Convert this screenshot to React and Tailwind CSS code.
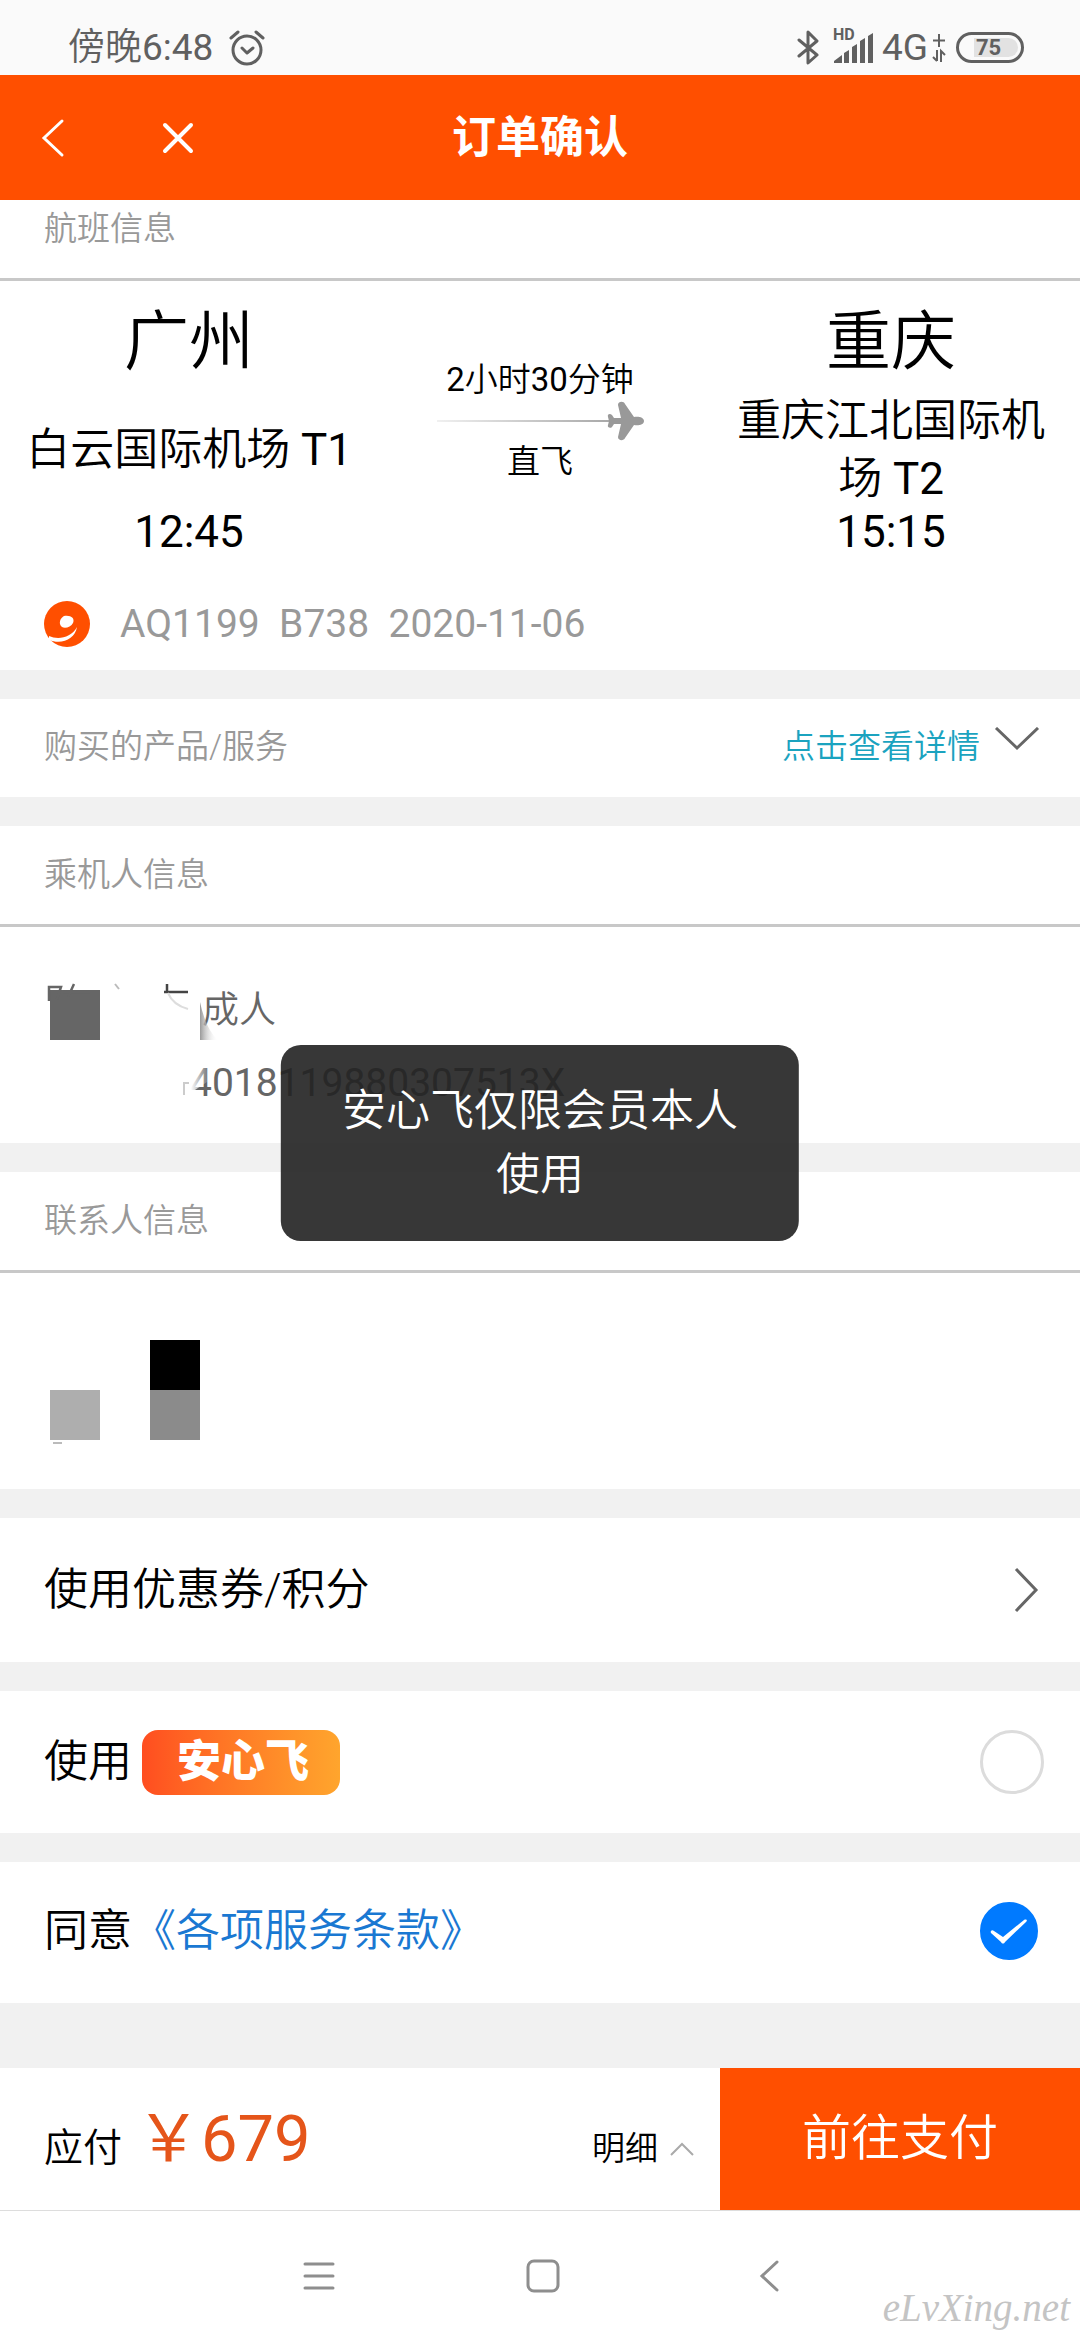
import { useState } from 'react';

function StatusBar() {
  return (
    <div className="h-[75px] bg-[#fafafa] text-[#606060] flex items-center justify-between pl-[68px] pr-14 pt-5">
      <div className="flex items-center gap-4">
        <span className="text-[37px] leading-10">傍晚<span className="font-normal">6:48</span></span>
        <svg width="36" height="36" viewBox="0 0 36 36" fill="none" stroke="currentColor" strokeWidth="3" strokeLinecap="round" strokeLinejoin="round">
          <circle cx="18" cy="20" r="14" />
          <path d="M13 18l5 5 6-5M2 8l7-6M27 2l7 6" />
        </svg>
      </div>
      <div className="flex items-center">
        <svg width="22" height="36" viewBox="0 0 22 36" fill="none" stroke="currentColor" strokeWidth="3" strokeLinejoin="round" strokeLinecap="round">
          <path d="M2 10l18 15-9 8V2l9 9L2 26" />
        </svg>
        <div className="relative ml-3.5 w-[41px] h-[34px]">
          <svg width="41" height="34" viewBox="0 0 41 34" fill="currentColor">
            <path d="M1 32v-2l8-6v8zM11 22l5-3v13h-5zM19 16l5-3v19h-5zM27 10l5-3v25h-5zM35 5l5-3v30h-5z" />
          </svg>
          <span className="absolute -top-1 left-0 text-[16px] leading-4 font-bold">HD</span>
        </div>
        <span className="ml-2 text-[37px] leading-10 font-normal">4G</span>
        <svg className="ml-1" width="14" height="32" viewBox="0 0 14 32" fill="none" stroke="currentColor" strokeWidth="2">
          <path d="M7 2v13M1 8.500h12M5 18v11M1 25l4 4M9 30V19l4 4" />
        </svg>
        <div className="ml-2.5 w-[68px] h-[31px] rounded-full border-[3px] border-current p-[3px]">
          <div className="h-full rounded-r-full ml-3 bg-[#e2e2e2] flex items-center pl-0.5">
            <span className="text-[22px] leading-5 font-bold">75</span>
          </div>
        </div>
      </div>
    </div>
  );
}

function Header() {
  return (
    <header className="h-[125px] bg-[#ff4f00] text-white grid grid-cols-3 items-center">
      <div className="flex items-center pl-10">
        <button aria-label="返回" className="w-[122px]">
          <svg width="26" height="40" viewBox="0 0 26 40" fill="none" stroke="currentColor" strokeWidth="3" strokeLinecap="round">
            <path d="M22 3L4 20l18 17" />
          </svg>
        </button>
        <button aria-label="关闭">
          <svg width="32" height="32" viewBox="0 0 32 32" fill="none" stroke="currentColor" strokeWidth="4" strokeLinecap="round">
            <path d="M3 3l26 26M29 3L3 29" />
          </svg>
        </button>
      </div>
      <h1 className="text-center text-[44px] leading-[60px] font-bold">订单确认</h1>
    </header>
  );
}

function SectionTitle({ children }) {
  return (
    <div className="h-[101px] border-b-[3px] border-[#c8c8c8] bg-white flex items-center px-11">
      <h2 className="text-[33px] text-[#999]">{children}</h2>
    </div>
  );
}

function Airport({ city, name, terminal, time }) {
  return (
    <div className="w-[35%] px-5 text-center">
      <p className="text-[65px] leading-[100px]">{city}</p>
      <div className="h-[116px] flex items-center justify-center text-[44px] leading-[58px]">
        <p>{name} <span className="font-normal">{terminal}</span></p>
      </div>
      <p className="text-[44px] leading-[48px] font-normal">{time}</p>
    </div>
  );
}

function FlightInfo() {
  return (
    <section className="bg-white">
      <div className="h-[81px] pb-5 border-b-[3px] border-[#c8c8c8] flex items-center px-11">
        <h2 className="text-[33px] text-[#999]">航班信息</h2>
      </div>
      <div className="flex pt-[11px] pb-0.5 text-black">
        <Airport city="广州" name="白云国际机场" terminal="T1" time="12:45" />
        <div className="flex-1 pt-[68px] flex flex-col items-center text-[33px] leading-10">
          <p>
            <span className="font-normal">2</span>小时<span className="font-normal">30</span>分钟
          </p>
          <svg width="210" height="42" viewBox="0 0 210 40">
            <defs>
              <linearGradient id="trail">
                <stop offset="0" stopColor="#f0f0f0" />
                <stop offset="1" stopColor="#a8a8a8" />
              </linearGradient>
            </defs>
            <rect x="2" y="19" width="174" height="2" fill="url(#trail)" />
            <path fill="#999" d="M179 17h7l-3-13c0-4 6-4 7-1l9 13c4-1 10 0 10 4s-6 5-10 4l-9 13c-1 3-7 3-7-1l3-13h-7l-2 3c-2 2-5 0-4-2l1-4-1-4c-1-3 2-4 4-2z" />
          </svg>
          <p>直飞</p>
        </div>
        <Airport city="重庆" name="重庆江北国际机场" terminal="T2" time="15:15" />
      </div>
      <div className="flex items-center gap-[30px] h-28 pt-5 px-11 text-[39px] font-normal text-[#999]">
        <svg width="46" height="46" viewBox="0 0 46 46">
          <circle cx="23" cy="23" r="23" fill="#ff4f00" />
          <path fill="#fff" fillRule="evenodd" d="M20 15c7-1 11 2 9 7-2 4-8 6-11 4-4-3-2-9 2-11z" />
          <path fill="#fff" d="M5 35c9 4 22 2 28-9-2 12-15 18-28 13z" />
        </svg>
        <p className="whitespace-pre">AQ1199  B738  2020-11-06</p>
      </div>
    </section>
  );
}

function Products() {
  return (
    <section className="h-[98px] pb-0.5 bg-white flex items-center justify-between pl-11 pr-10 text-[33px]">
      <h2 className="text-[#999]">购买的产品/服务</h2>
      <button className="flex items-center gap-3.5 text-[#1ba3bf]">
        点击查看详情
        <svg className="mb-4" width="46" height="24" viewBox="0 0 46 24" fill="none" stroke="#666" strokeWidth="3">
          <path d="M2 1l21 20L44 1" />
        </svg>
      </button>
    </section>
  );
}

// name and start of the id number are masked
function Passenger() {
  return (
    <section>
      <SectionTitle>乘机人信息</SectionTitle>
      <div className="relative h-[216px] bg-white pt-[54px] text-[#666]">
        <p className="pl-[202px] text-[37px] leading-[60px]">成人</p>
        <p className="pl-[190px] pt-3 text-[39px] leading-[60px] font-normal">4018119880307513X</p>
        <svg className="absolute left-0 top-0" width="240" height="190" viewBox="0 0 240 190" fill="none">
          <defs>
            <linearGradient id="fade">
              <stop offset="0" stopColor="#999" />
              <stop offset="1" stopColor="#fff" stopOpacity="0" />
            </linearGradient>
            <linearGradient id="mask">
              <stop offset="0.2" stopColor="#fff" />
              <stop offset="1" stopColor="#fff" stopOpacity="0" />
            </linearGradient>
          </defs>
          <path fill="#666" d="M50 63h50v50H50z" />
          <path stroke="#666" strokeWidth="2.500" d="M49 74V60h12l-4 12M63 65h27M74 57l-6 13" />
          <path stroke="#bbb" strokeWidth="2" d="M115 57l4 5" />
          <path stroke="#444" strokeWidth="2.500" d="M167 57v8M164 65h24" />
          <path stroke="#ddd" strokeWidth="2" d="M168 66q5 12 20 16" />
          <path fill="url(#fade)" d="M200 75v38h18q-12-10-18-38z" />
          <path fill="url(#mask)" d="M186 135h24v18l-24 16z" />
          <path stroke="#ccc" strokeWidth="2" d="M184 155v13M184 156h5" />
        </svg>
      </div>
    </section>
  );
}

function Contact() {
  return (
    <section>
      <SectionTitle>联系人信息</SectionTitle>
      <div className="h-[216px] bg-white pl-[50px] pt-[67px]">
        <div className="grid grid-cols-[50px_50px_50px] grid-rows-[50px_50px]">
          <div className="col-start-3 bg-black" />
          <div className="col-start-1 bg-[#aeaeae]" />
          <div className="col-start-3 bg-[#8b8b8b]" />
        </div>
        <svg width="20" height="6" viewBox="0 0 20 6">
          <path d="M3 3h9" stroke="#bbb" strokeWidth="2" />
        </svg>
      </div>
    </section>
  );
}

function Options() {
  const [cover, setCover] = useState(false);
  const [agree, setAgree] = useState(true);

  return (
    <div className="flex flex-col gap-[29px] text-[44px] text-black">
      <button className="h-[144px] bg-white flex items-center justify-between pl-11 pr-10">
        使用优惠券/积分
        <svg width="26" height="46" viewBox="0 0 26 46" fill="none" stroke="#666" strokeWidth="3">
          <path d="M2 2l20 21L2 44" />
        </svg>
      </button>

      <label className="h-[142px] bg-white flex items-center pl-11 pr-9">
        使用
        <span className="ml-2.5 w-[198px] h-[65px] rounded-2xl bg-gradient-to-r from-[#ff4d20] to-[#ffa52d] text-white font-black text-[44px] leading-[65px] text-center pl-1">
          安心飞
        </span>
        <input
          type="checkbox"
          checked={cover}
          onChange={(e) => setCover(e.target.checked)}
          className="ml-auto appearance-none size-16 rounded-full border-[3px] border-[#dcdcdc] checked:bg-[#007aff]"
        />
      </label>

      <div className="h-[141px] pb-1 bg-white flex items-center pl-11 pr-[42px]">
        <label htmlFor="agree">同意</label>
        <a href="#terms" className="text-[#1a78d2]">《各项服务条款》</a>
        <span className="relative ml-auto size-[58px]">
          <input
            id="agree"
            type="checkbox"
            checked={agree}
            onChange={(e) => setAgree(e.target.checked)}
            className="block appearance-none size-[58px] rounded-full border-[3px] border-[#dcdcdc] checked:border-[#007aff] checked:bg-[#007aff]"
          />
          <svg className="absolute inset-0 pointer-events-none" width="58" height="58" viewBox="0 0 58 58">
            <path fill="#fff" d="M11 31c-1-2 1-4 3-2l9 6 21-17c2-1 4 0 2 2L25 40c-1 2-3 2-4 0z" />
          </svg>
        </span>
      </div>
    </div>
  );
}

function PayBar() {
  return (
    <footer className="h-[142px] bg-white text-black flex">
      <div className="w-2/3 flex items-center justify-between pl-11 pr-[26px]">
        <p className="flex items-baseline gap-3.5">
          <span className="text-[39px]">应付</span>
          <span className="text-[65px] leading-[90px] font-normal text-[#e5551a]">￥679</span>
        </p>
        <button className="flex items-center gap-3 pt-5 text-[33px]">
          明细
          <svg width="24" height="14" viewBox="0 0 24 14" fill="none" stroke="#aaa" strokeWidth="2">
            <path d="M1 13L12 2l11 11" />
          </svg>
        </button>
      </div>
      <button className="w-1/3 bg-[#ff4f00] text-white text-[49px]">前往支付</button>
    </footer>
  );
}

function NavBar() {
  return (
    <nav className="relative h-[130px] border-t border-[#ddd] bg-white text-[#8e8e8e]">
      <div className="h-full flex items-center justify-center gap-[191px] pl-1.5">
        <button aria-label="菜单">
          <svg width="32" height="32" viewBox="0 0 32 32" stroke="currentColor" strokeWidth="3" strokeLinecap="round">
            <path d="M2 4h28M2 16h28M2 28h28" />
          </svg>
        </button>
        <button aria-label="主页">
          <svg width="34" height="34" viewBox="0 0 34 34" fill="none" stroke="currentColor" strokeWidth="3">
            <rect x="2" y="2" width="30" height="30" rx="6" />
          </svg>
        </button>
        <button aria-label="后退">
          <svg width="32" height="34" viewBox="0 0 32 34" fill="none" stroke="currentColor" strokeWidth="3" strokeLinecap="round">
            <path d="M26 3L11 17l15 14" />
          </svg>
        </button>
      </div>
      <span className="absolute right-2.5 bottom-2 text-[39px] leading-[48px] italic text-[#c4c4c4] [font-family:'Liberation_Serif',serif]">eLvXing.net</span>
    </nav>
  );
}

export default function App() {
  return (
    <div className="min-h-screen flex flex-col bg-[#f1f1f1] font-[350] [font-family:Roboto,'Noto_Sans_CJK_SC',sans-serif]">
      <StatusBar />
      <div className="relative flex-1 flex flex-col">
        <Header />
        <main className="flex-1 flex flex-col gap-[29px]">
          <FlightInfo />
          <Products />
          <Passenger />
          <Contact />
          <Options />
        </main>
        <PayBar />
        <div role="alert" className="absolute top-1/2 left-1/2 -translate-x-1/2 -translate-y-1/2 w-[48%] rounded-[20px] bg-[#212121]/90 px-14 py-[34px] text-center text-[44px] leading-[64px] text-white">
          安心飞仅限会员本人使用
        </div>
      </div>
      <NavBar />
    </div>
  );
}
